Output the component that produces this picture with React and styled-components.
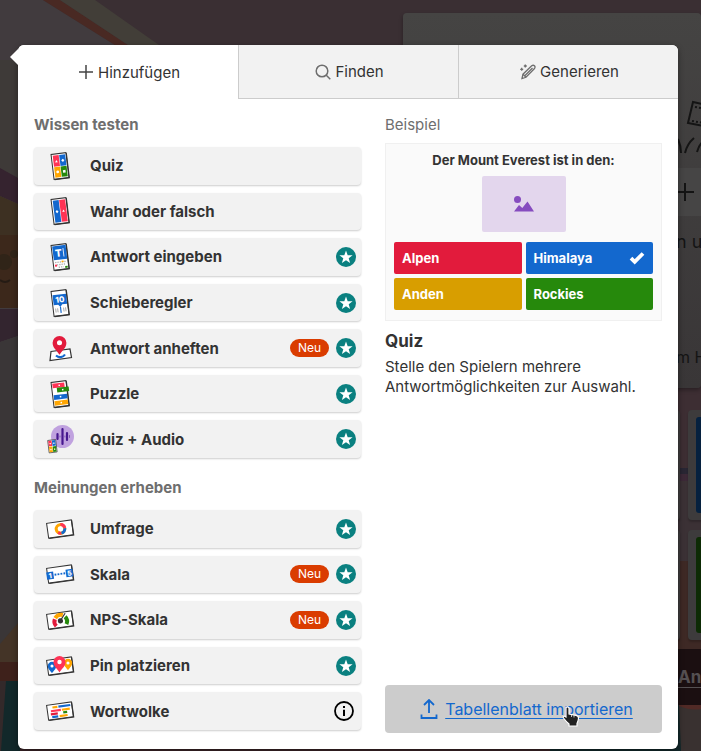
import React from "react";
import styled, { createGlobalStyle } from "styled-components";

const GlobalStyle = createGlobalStyle`
  *, *::before, *::after { box-sizing: border-box; }
  body { margin: 0; background: #3a2f33; color: #333; font-family: Inter, "Open Sans", sans-serif; }
  button { font-family: inherit; color: inherit; cursor: pointer; }
  h2, h3, p, ul { margin: 0; padding: 0; }
`;

const Page = styled.main`
  position: relative;
  display: flex;
  min-height: 100vh;
  padding: 45px 23px 2px 18px;
  overflow: hidden;
`;

const Backdrop = styled.div`
  position: absolute;
  inset: 0;
  overflow: hidden;
`;

const Scene = styled.svg`
  position: absolute;
  inset: 0;
  width: 100%;
  height: 100%;
`;

const EditorColumn = styled.div`
  position: relative;
  margin-left: 403px;
  padding-top: 13px;
  color: #141414;
`;

const EditorPanel = styled.div`
  height: 375px;
  padding: 84px 0 0 273px;
  border-radius: 4px;
  background: linear-gradient(#454443 0, #403e3e 150px, #393637 100%);
  box-shadow: 0 2px 4px #0005;
  overflow: hidden;
  white-space: nowrap;
`;

const EditorArt = styled.svg`
  display: block;
  width: 60px;
  height: 119px;
`;

const EditorText = styled.div`
  margin-top: ${(p) => p.$top}px;
  font-size: ${(p) => p.$size}px;
  line-height: 26px;
`;

const AnswerTiles = styled.div`
  display: grid;
  grid-template-columns: 277px 277px;
  gap: 10px 8px;
  margin-top: 22px;
`;

const AnswerTile = styled.div`
  height: 110px;
  padding: 7px 8px;
  border-radius: 4px;
  background: #3d3b3c;
  box-shadow: 0 2px 2px #0003;

  &::before {
    content: "";
    display: block;
    height: 96px;
    border-radius: 3px;
    background: ${(p) => p.$color};
  }
`;

const AddMore = styled.div`
  margin: 9px -20px 0 0;
  height: 56px;
  padding: 15px 0 0 275px;
  background: #1b0f11;
  color: #555052;
  font-size: 17px;
  font-weight: 700;
  line-height: 26px;
  text-decoration: underline;
  text-underline-offset: 4px;
  white-space: nowrap;
`;

const Dialog = styled.section`
  position: relative;
  flex: 1;
  display: flex;
  flex-direction: column;
  border-radius: 6px;
  background: #fff;
  box-shadow: 0 2px 6px #0006;

  &::before {
    content: "";
    position: absolute;
    top: 4px;
    left: -8px;
    border: solid transparent;
    border-width: 8px 8px 8px 0;
    border-right-color: #fff;
  }
`;

const Tabs = styled.div`
  display: grid;
  grid-template-columns: repeat(3, 1fr);
  border-radius: 6px 6px 0 0;
  overflow: hidden;
`;

const Tab = styled.button`
  display: flex;
  align-items: center;
  justify-content: center;
  gap: 4px;
  height: 54px;
  padding: 0 0 0 2px;
  border: 0 solid #ccc;
  border-width: ${(p) => (p.$active ? "0" : "0 0 1px 1px")};
  background: ${(p) => (p.$active ? "#fff" : "#f2f2f2")};
  font-size: 15px;
`;

const Columns = styled.div`
  flex: 1;
  display: grid;
  grid-template-columns: 327fr 277fr;
  gap: 24px;
  padding: 16px 16px;
`;

const TypeList = styled.div`
  display: flex;
  flex-direction: column;
  gap: 8px;
  padding-bottom: 3px;
`;

const TypeGroup = styled.section`
  display: contents;

  & + & > h2 { margin-top: 12px; }
`;

const GroupTitle = styled.h2`
  flex: none;
  padding-bottom: 4px;
  color: #6e6e6e;
  font-size: 15px;
  font-weight: 700;
  line-height: 20px;
`;

const TypeButton = styled.button`
  flex: 1 1 0;
  display: flex;
  align-items: center;
  min-height: 36px;
  padding: 0 5px 0 10px;
  border: 0;
  border-radius: 4px;
  background: #f2f2f2;
  box-shadow: 0 1px 2px #0003;
  font-size: 15px;
  font-weight: 700;
  text-align: left;
`;

const TypeIcon = styled.svg`
  flex: none;
  width: 32px;
  height: 32px;
  overflow: visible;
`;

const TypeName = styled.span`
  flex: 1;
  padding-left: 14px;
`;

const NewPill = styled.span`
  width: 39px;
  margin-right: 7px;
  border-radius: 9px;
  background: #da3c00;
  color: #fff;
  font-size: 12px;
  font-weight: 400;
  line-height: 18px;
  text-align: center;
`;

const StatusIcon = styled.svg`
  display: block;
  width: 20px;
  height: 20px;
  margin-right: ${(p) => (p.$inset ? 2 : 0)}px;
`;

const Preview = styled.aside`
  display: flex;
  flex-direction: column;
`;

const PreviewLabel = styled.p`
  color: #6e6e6e;
  font-size: 15px;
  line-height: 20px;
`;

const ExampleCard = styled.div`
  margin-top: 8px;
  padding: 8px 8px 10px;
  border: 1px solid #f0f0f0;
  background: #fafafa;
`;

const Question = styled.p`
  font-size: 13px;
  font-weight: 700;
  line-height: 16px;
  text-align: center;
`;

const PicturePlaceholder = styled.div`
  display: grid;
  place-items: center;
  width: 84px;
  height: 56px;
  margin: 8px auto 10px;
  border-radius: 2px;
  background: #e3d6ed;
`;

const Answers = styled.div`
  display: grid;
  grid-template-columns: 1fr 1fr;
  gap: 4px;
`;

const Answer = styled.div`
  display: flex;
  align-items: center;
  justify-content: space-between;
  height: 32px;
  padding: 0 8px;
  border-radius: 2px;
  background: ${(p) => p.$color};
  color: #fff;
  font-size: 13px;
  font-weight: 700;
`;

const PreviewTitle = styled.h3`
  margin-top: 8px;
  font-size: 17px;
  font-weight: 700;
  line-height: 24px;
`;

const PreviewText = styled.p`
  margin-top: 4px;
  font-size: 15px;
  line-height: 20px;
`;

const ImportButton = styled.button`
  position: relative;
  display: flex;
  align-items: center;
  justify-content: center;
  gap: 7px;
  height: 48px;
  margin-top: auto;
  padding: 0 0 0 6px;
  border: 0;
  border-radius: 4px;
  background: #ccc;
  color: #1368ce;
  font-size: 16px;
`;

const ImportLabel = styled.span`
  position: relative;
  text-decoration: underline;
  text-underline-offset: 3px;
`;

const HandCursor = styled.svg`
  position: absolute;
  left: 116px;
  top: 7px;
  width: 20px;
  height: 22px;
`;

const RED = "#e21b3c";
const PINK = "#ff3355";
const BLUE = "#1368ce";
const GREEN = "#26890c";
const AMBER = "#ffa602";
const INK = "#333";

const Portrait = ({ children }) => (
  <g transform="rotate(-7 16 16)">
    <rect x="8.5" y="3.5" width="15" height="25" fill="#fff" stroke={INK} strokeWidth="1" />
    <path d="M23.8 4v24.8H9" fill="none" stroke={INK} strokeWidth="1.2" />
    {children}
  </g>
);

const Landscape = ({ children }) => (
  <g transform="rotate(-8 16 16)">
    <rect x="3.5" y="8.5" width="25" height="15" fill="#fff" stroke={INK} strokeWidth="1" />
    <path d="M28.7 9v14.9H4" fill="none" stroke={INK} strokeWidth="1.2" />
    {children}
  </g>
);

const MapPin = ({ x, y, s, color, hole = "#fff" }) => (
  <g transform={`translate(${x} ${y}) scale(${s})`}>
    <path d="M0 9C-2.400 5-6 3-6-1.500a6 6 0 0 1 12 0C6 3 2.400 5 0 9Z" fill={color} />
    <circle cy="-1.500" r="2.200" fill={hole} />
  </g>
);

const drawings = {
  quiz: (
    <Portrait>
      <path d="M10 5h6v11h-6z" fill={PINK} />
      <path d="M16.500 5h6v11h-6z" fill={BLUE} />
      <path d="M10 16.500h6v10.500h-6z" fill={AMBER} />
      <path d="M16.500 16.500h6v10.500h-6z" fill={GREEN} />
      <path d="m13 9.500 1.400 2.500h-2.800z M19.500 9l1.600 1.700-1.600 1.700-1.600-1.700z M18.300 20.500h2.600v2.600h-2.600z" fill="#fff" />
      <circle cx="13" cy="21.600" r="1.400" fill="#fff" />
    </Portrait>
  ),
  truth: (
    <Portrait>
      <path d="M10 5h6v22h-6z" fill={BLUE} />
      <path d="M16.500 5h6v22h-6z" fill={PINK} />
      <path d="m13 14.500 1.500 1.700-1.500 1.700-1.500-1.700z M19.500 14.800l1.300 2.400h-2.600z" fill="#fff" />
    </Portrait>
  ),
  type: (
    <Portrait>
      <path d="M9.500 4.500h13.500v14H9.500z" fill={BLUE} />
      <text x="15" y="15.500" fontSize="10" fontWeight="800" textAnchor="middle" fill="#fff">T</text>
      <path d="M20 7.500v8.500" stroke="#fff" strokeWidth=".8" />
      <path d="M10.500 21h11.500M12 23.500h9M13.500 26h5" stroke="#aaa" strokeWidth="1.300" strokeDasharray="1.300 1" />
      <path d="M10 23h2v2h-2z" fill={PINK} />
      <path d="M17 20h2v1.500h-2z" fill={AMBER} />
      <path d="M20 25.500h2.500v2H20z" fill={GREEN} />
    </Portrait>
  ),
  slider: (
    <Portrait>
      <path d="M9.500 7.500h13.500v10h-5L16 20l-2-2.500H9.500z" fill={BLUE} />
      <text x="16.200" y="15.500" fontSize="8" fontWeight="800" textAnchor="middle" fill="#fff">10</text>
      <path d="M11 21v4M13 21v4M19 21v4M21 21v4" stroke="#999" strokeWidth=".8" />
      <path d="M16 20v6" stroke={BLUE} strokeWidth="1.200" />
    </Portrait>
  ),
  pinAnswer: (
    <g>
      <path d="m7 19.500 19-2.500 1.500 8.500L6 28.500z" fill="#fff" stroke={INK} strokeWidth="1.200" />
      <path d="M12 23.500c3 2.500 7 2 9-1" fill="none" stroke={BLUE} strokeWidth="2.200" />
      <MapPin x="15.500" y="12.500" s="1.150" color={RED} />
    </g>
  ),
  puzzle: (
    <Portrait>
      <path d="M9.500 5h12v4.500h-12z" fill={PINK} />
      <path d="M13.500 9.500h12v4.700h-12z" fill={GREEN} />
      <path d="M9.500 16.500h13.500v4.700H9.500z" fill={BLUE} />
      <path d="M9.500 22.500h13.500V27H9.500z" fill={AMBER} />
      <path d="M15.500 6.500h1.500v1.500h-1.500z M18.500 11.200h1.500v1.500h-1.500z M15.500 18h1.500v1.500h-1.500z M15.500 24h1.500v1.500h-1.500z" fill="#fff" />
    </Portrait>
  ),
  audio: (
    <g>
      <circle cx="18.500" cy="13.500" r="11.500" fill="#c0a2df" />
      <path d="M13.500 11v5M18.500 6v15M23 10v7" stroke="#46178f" strokeWidth="2.200" strokeLinecap="round" />
      <path d="M16 13v1M20.900 13v1M25.500 12.500v2" stroke="#46178f" strokeWidth="1" strokeLinecap="round" opacity=".5" />
      <g transform="rotate(-7 8 24)">
        <rect x="4.500" y="17" width="8" height="12.500" fill="#fff" stroke={INK} strokeWidth=".7" />
        <path d="M5 17.500h3.300V23H5z" fill={PINK} />
        <path d="M8.700 17.500H12V23H8.700z" fill={BLUE} />
        <path d="M5 23.500h3.300V29H5z" fill={AMBER} />
        <path d="M8.700 23.500H12V29H8.700z" fill={GREEN} />
        <path d="M6 19.800h1.300v1.300H6zM9.700 19.800H11v1.300H9.700zM6 25.800h1.300v1.300H6zM9.700 25.800H11v1.300H9.700z" fill="#fff" />
      </g>
    </g>
  ),
  poll: (
    <Landscape>
      <g fill="none" strokeWidth="3">
        <circle cx="16.500" cy="16" r="4.300" stroke={AMBER} />
        <path d="M17 11.700a4.300 4.300 0 0 1 3.800 4" stroke={PINK} />
        <path d="M20.800 16a4.300 4.300 0 0 1-4 4.300" stroke={BLUE} />
        <path d="M16.500 20.300a4.300 4.300 0 0 1-2.800-1" stroke={PINK} />
      </g>
    </Landscape>
  ),
  scale: (
    <Landscape>
      <path d="M2.500 12.500h7v7.500h-7zM22 12.500h7v7.500h-7z" fill={BLUE} />
      <text x="6" y="19" fontSize="7" fontWeight="800" textAnchor="middle" fill="#fff">1</text>
      <text x="25.500" y="19" fontSize="7" fontWeight="800" textAnchor="middle" fill="#fff">5</text>
      <path d="M10.500 16h11" stroke={BLUE} strokeWidth="1.800" strokeDasharray="1.800 1.200" />
    </Landscape>
  ),
  nps: (
    <Landscape>
      <g fill="none" strokeWidth="4">
        <path d="M11.500 21.500a6.500 6.500 0 0 1-.5-7" stroke={RED} />
        <path d="M11.500 13.500a7 7 0 0 1 8-2" stroke={AMBER} />
        <path d="M21.500 13.500a6.500 6.500 0 0 1 .300 7.500" stroke={GREEN} />
      </g>
      <circle cx="16.300" cy="17" r="2.600" fill={INK} />
      <path d="m16 17 6-7" stroke={INK} strokeWidth="1.200" />
    </Landscape>
  ),
  pins: (
    <g>
      <Landscape />
      <MapPin x="8" y="17" s=".700" color={BLUE} />
      <MapPin x="24" y="14" s=".700" color={AMBER} />
      <MapPin x="15.500" y="13.500" s="1" color={PINK} />
    </g>
  ),
  cloud: (
    <Landscape>
      <g fill="none" strokeWidth="2.200">
        <path d="M15 11.500h12" stroke={BLUE} />
        <path d="M9 11.500h5" stroke={AMBER} />
        <path d="M7 15h10" stroke={PINK} />
        <path d="M18 15h8" stroke={AMBER} />
        <path d="M6.500 18h7" stroke={RED} />
        <path d="M19 17.800h4" stroke={GREEN} />
        <path d="M7.500 21h6" stroke={BLUE} />
        <path d="M15 21h8" stroke={AMBER} />
      </g>
    </Landscape>
  ),
};

const StarBadge = () => (
  <StatusIcon viewBox="0 0 20 20" role="img" aria-label="Premium">
    <circle cx="10" cy="10" r="10" fill="#0a8080" />
    <path d="m10 3.500 1.700 4.700 4.900.1-3.900 3 1.400 4.800L10 13.300l-4.100 2.800 1.400-4.800-3.900-3 4.900-.1z" fill="#fff" />
  </StatusIcon>
);

const InfoBadge = () => (
  <StatusIcon $inset viewBox="0 0 20 20" role="img" aria-label="Info">
    <circle cx="10" cy="10" r="9" fill="none" stroke="#000" strokeWidth="1.800" />
    <path d="M9 5h2v2H9zM9 8.700h2V15H9z" />
  </StatusIcon>
);

const groups = [
  {
    title: "Wissen testen",
    items: [
      { name: "Quiz", icon: "quiz" },
      { name: "Wahr oder falsch", icon: "truth" },
      { name: "Antwort eingeben", icon: "type", star: true },
      { name: "Schieberegler", icon: "slider", star: true },
      { name: "Antwort anheften", icon: "pinAnswer", isNew: true, star: true },
      { name: "Puzzle", icon: "puzzle", star: true },
      { name: "Quiz + Audio", icon: "audio", star: true },
    ],
  },
  {
    title: "Meinungen erheben",
    items: [
      { name: "Umfrage", icon: "poll", star: true },
      { name: "Skala", icon: "scale", isNew: true, star: true },
      { name: "NPS-Skala", icon: "nps", isNew: true, star: true },
      { name: "Pin platzieren", icon: "pins", star: true },
      { name: "Wortwolke", icon: "cloud", info: true },
    ],
  },
];

const answers = [
  { text: "Alpen", color: "#e21b3c" },
  { text: "Himalaya", color: "#1368ce", correct: true },
  { text: "Anden", color: "#d89e00" },
  { text: "Rockies", color: "#26890c" },
];

const EditorBackdrop = () => (
  <Backdrop aria-hidden="true">
    <Scene viewBox="0 0 701 751" preserveAspectRatio="xMinYMin slice">
      <path d="M0 0h701v751H0z" fill="#3a2f33" />
      <path d="M0 0h43l72 45v706H0z" fill="#413b3e" />
      <path d="M43 0h17l68 45h-13z" fill="#492923" />
      <path d="M60 0h35l64 45h-31z" fill="#423e38" />
      <path d="M0 60h18v120L0 168z" fill="#3e3a38" />
      <path d="m0 168 18 10v26l-18-8z" fill="#35232f" />
      <path d="m0 196 18 8v104H0z" fill="#3d3022" />
      <path d="M0 235h18v73H0z" fill="#3c281b" />
      <circle cx="4" cy="262" r="8" fill="#302418" />
      <circle cx="14" cy="254" r="4" fill="#302418" />
      <path d="M0 280q5 4 10 0" stroke="#251b14" fill="none" strokeWidth="2" />
      <path d="M0 309h18v27L0 342z" fill="#33252f" />
      <path d="m0 342 18-6v326H0z" fill="#3a3637" />
      <path d="m0 644 18-21v40H0z" fill="#443427" />
      <path d="M0 662h18v19H0z" fill="#3e211b" />
      <path d="M0 681h701v70H0z" fill="#12282a" />
      <path d="M0 681h6l-5 70H0z" fill="#33292a" />
      <path d="M20 747h530v4H20z" fill="#3a2427" />
      <path d="M670 388h31v80h-31z" fill="#3d2e33" />
      <path d="M670 468h31v6h-31z" fill="#292633" />
      <path d="M670 474h31v7h-31z" fill="#3c2937" />
      <path d="M670 481h31v80h-31z" fill="#3b3135" />
      <path d="M670 561h31v90h-31z" fill="#3e2925" />
      <path d="M679 705h22v46h-20z" fill="#393130" />
      <path d="M679 705h22v4q-10 2-22-3z" fill="#512a26" />
    </Scene>
    <EditorColumn>
      <EditorPanel>
        <EditorArt viewBox="0 0 60 119">
          <g fill="none" stroke="#141414" strokeWidth="2">
            <path d="m17 5-5 21 20 4 4-21z" />
            <path d="m19 10 12 2m-15 12 12 2" strokeDasharray="2 2" />
            <path d="M2 42q3 7 3 14M9 56q2-9 9-15M21 55q2-8 8-12" />
          </g>
          <path d="M0 71h60v48H0z" fill="#464545" />
          <path d="M0 95h18M9 86v18" stroke="#141414" strokeWidth="2" />
        </EditorArt>
        <EditorText $top={13} $size={18}>n u</EditorText>
        <EditorText $top={89} $size={16}>m H</EditorText>
      </EditorPanel>
      <AnswerTiles>
        <AnswerTile $color="#430812" />
        <AnswerTile $color="#06213f" />
        <AnswerTile $color="#402f00" />
        <AnswerTile $color="#0d2b05" />
      </AnswerTiles>
      <AddMore>An</AddMore>
    </EditorColumn>
  </Backdrop>
);

export default function App() {
  return (
    <>
      <GlobalStyle />
      <Page>
        <EditorBackdrop />
        <Dialog role="dialog" aria-label="Frage hinzufügen">
          <Tabs role="tablist">
            <Tab role="tab" aria-selected="true" $active>
              <svg width="16" height="16" viewBox="0 0 16 16" stroke="#444" strokeWidth="1.500">
                <path d="M8 1v14M1 8h14" />
              </svg>
              Hinzufügen
            </Tab>
            <Tab role="tab" aria-selected="false">
              <svg width="16" height="16" viewBox="0 0 16 16" fill="none" stroke="#6e6e6e" strokeWidth="1.500">
                <circle cx="7" cy="7" r="5.800" />
                <path d="m11 11 4.300 4.300" />
              </svg>
              Finden
            </Tab>
            <Tab role="tab" aria-selected="false">
              <svg width="16" height="16" viewBox="0 0 16 16" fill="none" stroke="#6e6e6e" strokeWidth="1.300">
                <path d="m2 14.500 1-4.300 8.700-8.400c2-1.500 4.300.7 2.800 2.700L6 13.300z" />
                <path d="m3 10.200 3 3.100M5 11.500 12.500 4" />
                <path d="M5.300.5v3M3.800 2h3M1.700 3.800v3M.2 5.300h3" />
              </svg>
              Generieren
            </Tab>
          </Tabs>
          <Columns>
            <TypeList>
              {groups.map((group) => (
                <TypeGroup key={group.title}>
                  <GroupTitle>{group.title}</GroupTitle>
                  {group.items.map((item) => (
                    <TypeButton key={item.name}>
                      <TypeIcon viewBox="0 0 32 32" aria-hidden="true">{drawings[item.icon]}</TypeIcon>
                      <TypeName>{item.name}</TypeName>
                      {item.isNew && <NewPill>Neu</NewPill>}
                      {item.star && <StarBadge />}
                      {item.info && <InfoBadge />}
                    </TypeButton>
                  ))}
                </TypeGroup>
              ))}
            </TypeList>
            <Preview>
              <PreviewLabel>Beispiel</PreviewLabel>
              <ExampleCard>
                <Question>Der Mount Everest ist in den:</Question>
                <PicturePlaceholder>
                  <svg width="20" height="16" viewBox="0 0 20 16" fill="#864cbf" aria-hidden="true">
                    <circle cx="3.500" cy="3.500" r="3.500" />
                    <path d="m0 15.500 5-6.500 3.300 3 5.200-6.500 6.500 10z" />
                  </svg>
                </PicturePlaceholder>
                <Answers>
                  {answers.map((answer) => (
                    <Answer key={answer.text} $color={answer.color}>
                      {answer.text}
                      {answer.correct && (
                        <svg width="16" height="14" viewBox="0 0 16 14" role="img" aria-label="Richtig">
                          <path d="m2 7.200 3.700 3.600L14 2.500" fill="none" stroke="#fff" strokeWidth="3.800" />
                        </svg>
                      )}
                    </Answer>
                  ))}
                </Answers>
              </ExampleCard>
              <PreviewTitle>Quiz</PreviewTitle>
              <PreviewText>Stelle den Spielern mehrere Antwortmöglichkeiten zur Auswahl.</PreviewText>
              <ImportButton>
                <svg width="18" height="20" viewBox="0 0 18 20" fill="none" stroke="#1368ce" strokeWidth="1.800">
                  <path d="M9 14V1.500M4 6l5-5 5 5M1.500 15.500V19h15v-3.500" />
                </svg>
                <ImportLabel>
                  Tabellenblatt importieren
                  <HandCursor viewBox="0 0 20 22" aria-hidden="true">
                    <path
                      d="M5 1.500C6.500.5 8 1 8 2.500V8l7 1.300c1.700.3 2.500 1.200 2.500 2.700 0 3-1 4-1.500 5.500V20H8v-2c-2-1.500-4-4-5.500-6-.8-1.300.8-2.500 2-1.300L5 11z"
                      fill="#222"
                      stroke="#fff"
                      strokeWidth="1.200"
                    />
                    <path d="M10.500 8.500v2.500M13 9v2.500" stroke="#fff" strokeWidth=".700" />
                  </HandCursor>
                </ImportLabel>
              </ImportButton>
            </Preview>
          </Columns>
        </Dialog>
      </Page>
    </>
  );
}
